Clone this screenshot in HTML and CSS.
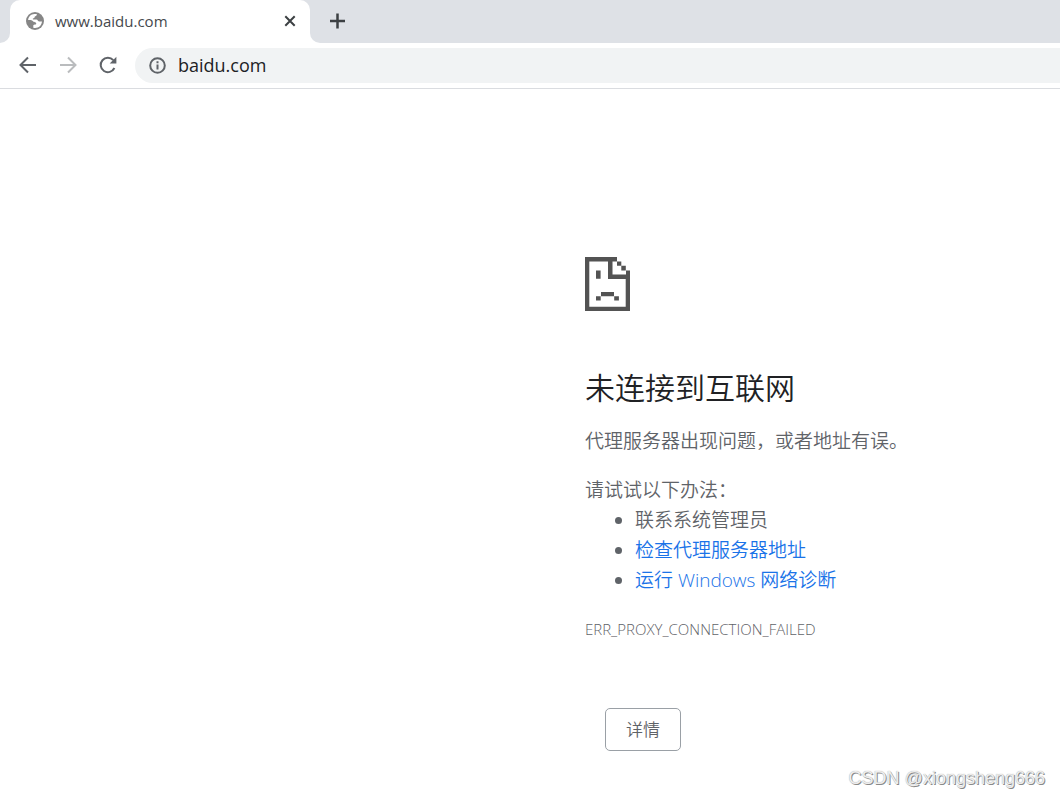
FILE: index.html
```html
<!DOCTYPE html>
<html lang="zh-CN">
<head>
<meta charset="utf-8">
<title>www.baidu.com</title>
<link rel="stylesheet" href="styles.css">
</head>
<body>
<header class="browser">
  <div class="tab-strip">
    <div class="previous-tab"></div>
    <div class="tab">
      <svg class="globe" viewBox="0 0 18 18" aria-hidden="true">
        <circle cx="9" cy="9" r="9" fill="#868686"/>
        <path fill="#fff" d="M8.3 2h2.5c0 1.400-.5 2.100-1.500 2.300-.8.100-.5 1.300-1.100 1.700-.6.500-1.200.1-1.400.8-.1.700.6.800 1.500.8h2.200c1.300.1 1.200 1.900 2.500 1.900H16c-.3 3.700-3.200 6.500-6.800 6.500-.700 0-1.300-.1-1.900-.3v-2.200c0-.800 1.300-.8 2.300-.9.900-.2.800-1.500.1-2-.9-.5-1.600-.2-2.400-1-.800-.8-1.500-1.600-2.700-1.600H2.100C2.400 4.700 5 2.200 8.300 2z"/>
      </svg>
      <span class="tab-title">www.baidu.com</span>
      <button class="icon-button close" aria-label="关闭">
        <svg width="12" height="12" viewBox="0 0 12 12"><path d="M1.300 1.300l9.400 9.400M10.700 1.300l-9.400 9.400" stroke="#3c4043" stroke-width="2"/></svg>
      </button>
    </div>
    <div class="tab-rest">
      <button class="icon-button" aria-label="新标签页">
        <svg width="16" height="16" viewBox="0 0 16 16"><path d="M8.500 .5v15M1 8h15" stroke="#3c4043" stroke-width="2.500"/></svg>
      </button>
    </div>
  </div>
  <div class="toolbar">
    <button class="icon-button" aria-label="后退">
      <svg width="18" height="18" viewBox="0 0 18 18" fill="none" stroke="#5f6368" stroke-width="2"><path d="M17 9H2M9 1.500L1.500 9 9 16.500"/></svg>
    </button>
    <button class="icon-button" aria-label="前进" disabled>
      <svg width="18" height="18" viewBox="0 0 18 18" fill="none" stroke="#babcbe" stroke-width="2"><path d="M1 9h15M9 1.500L16.500 9 9 16.500"/></svg>
    </button>
    <button class="icon-button" aria-label="重新加载">
      <svg width="18" height="18" viewBox="0 0 18 18"><path d="M15.400 12A7.200 7.200 0 1 1 14.300 4.200" fill="none" stroke="#5f6368" stroke-width="2"/><path d="M17.400.8v6.700h-6.700z" fill="#5f6368"/></svg>
    </button>
    <label class="address">
      <svg width="17" height="17" viewBox="0 0 17 17" aria-hidden="true"><circle cx="8.500" cy="8.500" r="7.300" fill="none" stroke="#5f6368" stroke-width="2"/><path d="M8.500 7.500v5M8.500 4.300v1.900" stroke="#5f6368" stroke-width="2"/></svg>
      <input class="address-input" type="text" value="baidu.com" aria-label="地址">
    </label>
  </div>
</header>
<main class="error-page">
  <svg class="sad-file" viewBox="0 0 45 54" fill="#535353" aria-hidden="true">
    <path fill-rule="evenodd" d="M0 0H32V4.500H27.500V17.500H41V13.500H45V54H0zM4.300 4.500V49.800H40.700V22H23V4.500z"/>
    <path d="M32 4.500h4.300v4.300H32zM36.300 8.800h4.500v4.700h-4.500zM11 13.500h4.600v8.200H11zM16 35h13v4.300H16zM11 39.300h4.700v4.200H11zM29.200 39.300h4.700v4.200h-4.700z"/>
  </svg>
  <h1 class="title">未连接到互联网</h1>
  <p class="summary">代理服务器出现问题，或者地址有误。</p>
  <p class="hint">请试试以下办法：</p>
  <ul class="suggestions">
    <li>联系系统管理员</li>
    <li><a class="link" href="#proxy">检查代理服务器地址</a></li>
    <li><a class="link" href="#diagnose">运行 Windows 网络诊断</a></li>
  </ul>
  <p class="error-code">ERR_PROXY_CONNECTION_FAILED</p>
  <button class="details">详情</button>
</main>
<div class="watermark">CSDN @xiongsheng666</div>
</body>
</html>
```
FILE: styles.css
```css
* {
  box-sizing: border-box;
}

body {
  margin: 0;
  min-height: 100vh;
  background: #fff;
  color: #5f6368;
  font-family: "Open Sans", "Noto Sans CJK SC", sans-serif;
  font-size: 19px;
  font-weight: 350;
  line-height: 30px;
}

.browser {
  border-bottom: 1px solid #dadce0;
}

.tab-strip {
  display: flex;
  height: 43px;
  background: linear-gradient(#dee1e6 50%, #fff 50%);
}

.previous-tab {
  width: 10px;
  background: #dee1e6;
  border-bottom-right-radius: 10px;
}

.tab {
  display: flex;
  align-items: center;
  width: 300px;
  padding: 0 14px 1px 16px;
  background: #fff;
  border-radius: 10px 10px 0 0;
}

.globe {
  width: 18px;
  height: 18px;
}

.tab-title {
  flex: 1;
  padding-left: 11px;
  color: #45484c;
  font-size: 15px;
  font-weight: 400;
}

.tab-rest {
  display: flex;
  flex: 1;
  align-items: center;
  padding: 0 0 1px 19px;
  background: #dee1e6;
  border-bottom-left-radius: 10px;
}

.icon-button {
  display: flex;
  padding: 0;
  border: 0;
  background: none;
}

.toolbar {
  display: flex;
  align-items: center;
  gap: 22px;
  height: 45px;
  padding: 0 0 1px 19px;
}

.address {
  display: flex;
  flex: 1;
  align-items: center;
  gap: 12px;
  height: 35px;
  margin-left: -4px;
  padding-left: 14px;
  background: #f1f3f4;
  border-radius: 18px 0 0 18px;
}

.address-input {
  flex: 1;
  min-width: 0;
  padding: 0;
  border: 0;
  outline: 0;
  background: none;
  color: #202124;
  font: 400 18px/24px "Open Sans", sans-serif;
}

.error-page {
  padding: 168px 20px 46px;
  margin-left: 565px;
}

.sad-file {
  display: block;
  width: 45px;
  height: 54px;
}

.title {
  margin: 58px 0 19px;
  color: #202124;
  font-size: 30px;
  font-weight: 350;
  line-height: 38px;
}

.summary {
  margin: 0 0 19px;
}

.hint {
  margin: 0;
}

.suggestions {
  margin: 0;
  padding-left: 50px;
}

.link {
  color: #1a73e8;
  text-decoration: none;
}

.error-code {
  margin: 19px 0 64px;
  font-size: 15px;
  font-weight: 300;
}

.details {
  display: block;
  margin-left: 20px;
  padding: 8px 20px;
  border: 1px solid #9aa0a6;
  border-radius: 5px;
  background: #fff;
  color: #5f6368;
  font: 350 17px/25px "Open Sans", "Noto Sans CJK SC", sans-serif;
}

.watermark {
  position: absolute;
  right: 15px;
  bottom: 7px;
  color: #eee;
  font-family: "Liberation Sans", sans-serif;
  font-size: 18px;
  line-height: 24px;
  text-shadow: 0 0 1px #999, 1px 1px 0 #888;
}
```
